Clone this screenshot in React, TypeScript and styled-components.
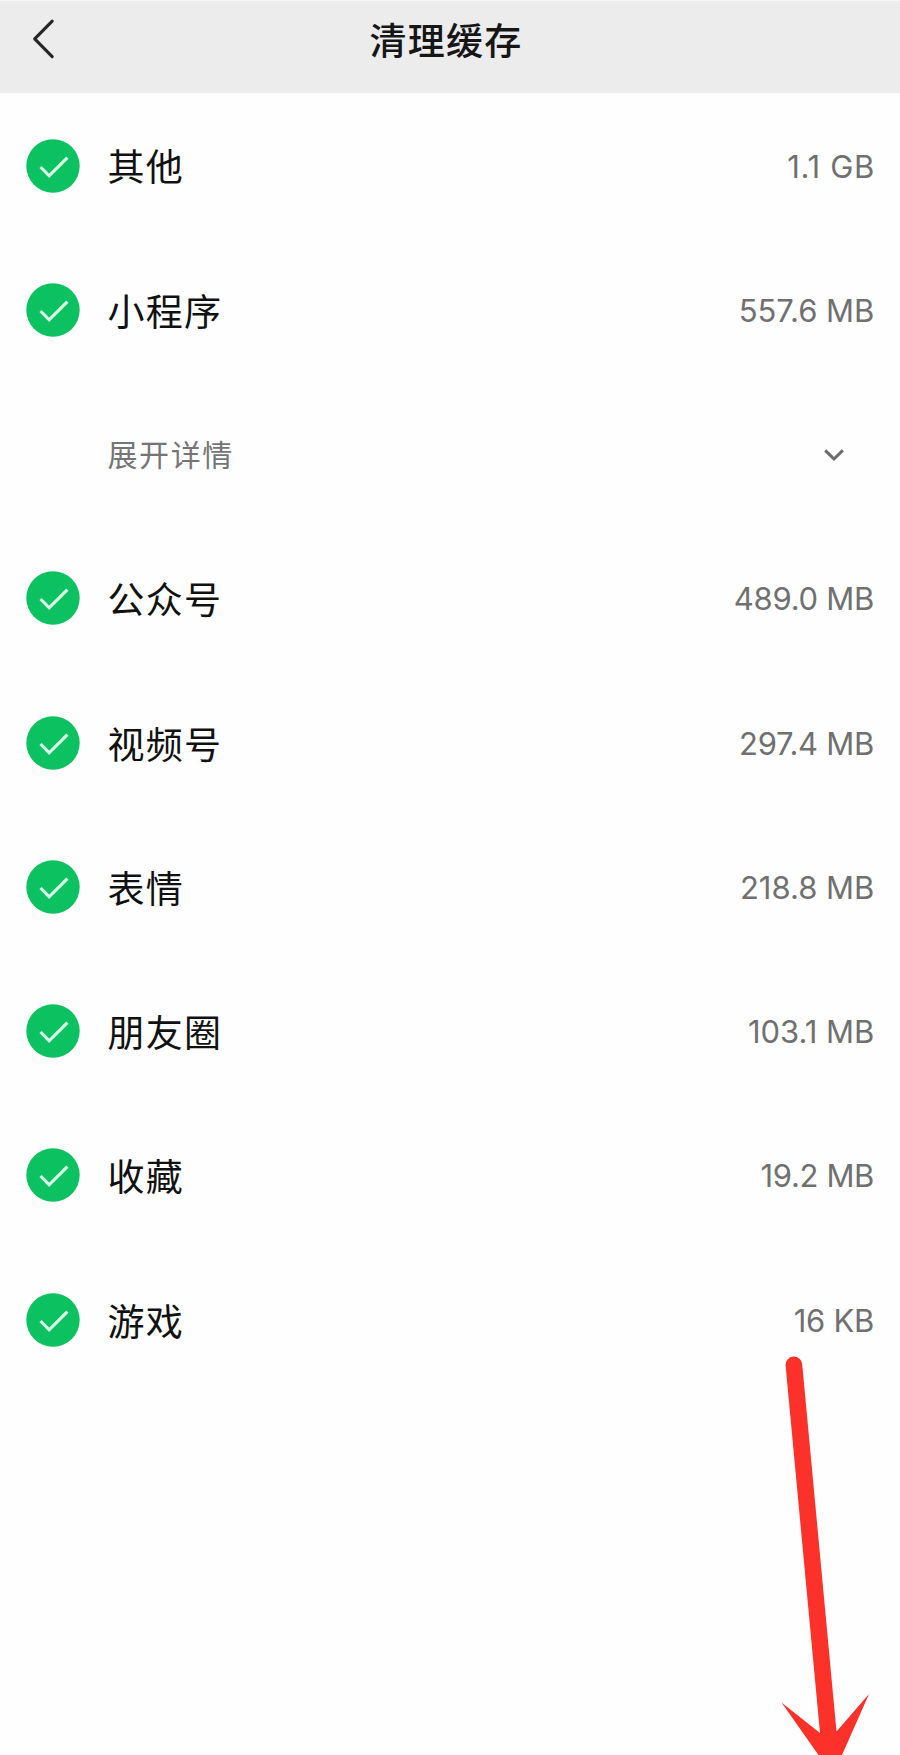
import React from "react";
import styled, { createGlobalStyle } from "styled-components";

const GlobalStyle = createGlobalStyle`
  *, *::before, *::after { box-sizing: border-box; }
  body {
    margin: 0;
    background: #fefefe;
    font-family: "Noto Sans CJK SC", sans-serif;
  }
`;

const Screen = styled.div`
  position: relative;
  width: 900px;
  height: 1755px;
  overflow: hidden;
  background: #fefefe;
`;

const Header = styled.header`
  display: grid;
  grid-template-columns: 90px 1fr 98px;
  height: 93px;
  padding-bottom: 16px;
  align-items: center;
  background: #ececec;
  border-top: 1px solid #f5f5f5;
`;

const BackButton = styled.button`
  display: flex;
  margin: 0 0 0 30px;
  padding: 0;
  border: 0;
  background: none;
`;

const Title = styled.h1`
  margin: 0;
  text-align: center;
  font-size: 37px;
  line-height: 54px;
  font-weight: 500;
  letter-spacing: 1.2px;
  color: #161616;
`;

const List = styled.ul`
  margin: 0;
  padding: 0.5px 0 0;
  list-style: none;
`;

const Row = styled.li`
  display: flex;
  align-items: center;
  height: 144.28px;
  padding: 0 26px 0 26px;
`;

const Label = styled.span`
  flex: 1;
  margin-left: 27.5px;
  padding-bottom: 0.4px;
  font-size: 37px;
  line-height: 54px;
  letter-spacing: 1.2px;
  color: #111;
`;

const Size = styled.span<{ $tracking: number }>`
  padding-top: 2px;
  margin-right: ${(p) => -p.$tracking - 0.4}px;
  font-family: Inter, sans-serif;
  font-size: 31px;
  line-height: 40px;
  letter-spacing: ${(p) => p.$tracking}px;
  white-space: nowrap;
  color: #707070;
`;

const DetailRow = styled(Row)`
  padding: 0 55px 0 107.5px;
  justify-content: space-between;
`;

const DetailLabel = styled.span`
  padding-bottom: 2px;
  font-size: 30px;
  line-height: 44px;
  letter-spacing: 1.6px;
  color: #757575;
`;

const Chevron = styled.svg`
  margin-top: 2px;
`;

const Arrow = styled.svg`
  position: absolute;
  right: 0;
  bottom: 0;
  pointer-events: none;
`;

const CheckIcon = () => (
  <svg width="54" height="54" viewBox="0 0 54 54" fill="none">
    <circle cx="27" cy="27" r="26.7" fill="#0bc160" />
    <path d="M14.5 28 L23.2 36.8 L41.4 18.7" stroke="#d8fbe6" strokeWidth="3.2" />
  </svg>
);

const BackIcon = () => (
  <svg width="28" height="44" viewBox="0 0 28 44" fill="none">
    <path d="M22.2 4.2 L4.7 21.9 L22.2 39.6" stroke="#262626" strokeWidth="3.1" strokeLinecap="round" strokeLinejoin="round" />
  </svg>
);

const ChevronIcon = () => (
  <Chevron width="22" height="14" viewBox="0 0 22 14" fill="none">
    <path d="M2.2 2.4 L11 11 L19.8 2.4" stroke="#6b6b6b" strokeWidth="3" />
  </Chevron>
);

type Item = { label: string; size: string; tracking: number; expandable?: boolean };

const items: Item[] = [
  { label: "其他", size: "1.1 GB", tracking: 0.7 },
  { label: "小程序", size: "557.6 MB", tracking: 0, expandable: true },
  { label: "公众号", size: "489.0 MB", tracking: -0.25 },
  { label: "视频号", size: "297.4 MB", tracking: -0.25 },
  { label: "表情", size: "218.8 MB", tracking: 0 },
  { label: "朋友圈", size: "103.1 MB", tracking: 0 },
  { label: "收藏", size: "19.2 MB", tracking: -0.35 },
  { label: "游戏", size: "16 KB", tracking: -0.25 },
];

export default function App() {
  return (
    <Screen>
      <GlobalStyle />
      <Header>
        <BackButton aria-label="返回">
          <BackIcon />
        </BackButton>
        <Title>清理缓存</Title>
      </Header>
      <List>
        {items.map((item) => (
          <React.Fragment key={item.label}>
            <Row>
              <CheckIcon />
              <Label>{item.label}</Label>
              <Size $tracking={item.tracking}>{item.size}</Size>
            </Row>
            {item.expandable && (
              <DetailRow>
                <DetailLabel>展开详情</DetailLabel>
                <ChevronIcon />
              </DetailRow>
            )}
          </React.Fragment>
        ))}
      </List>
      <Arrow width="160" height="475" viewBox="740 1280 160 475">
        <path
          d="M785.6 1365.5 A8.3 8.3 0 0 1 802.2 1364.3 L836.5 1731.5 L869 1694 L842 1755 L818.5 1755 L781.5 1702.5 L820 1733 Z"
          fill="#fc3129"
        />
      </Arrow>
    </Screen>
  );
}
